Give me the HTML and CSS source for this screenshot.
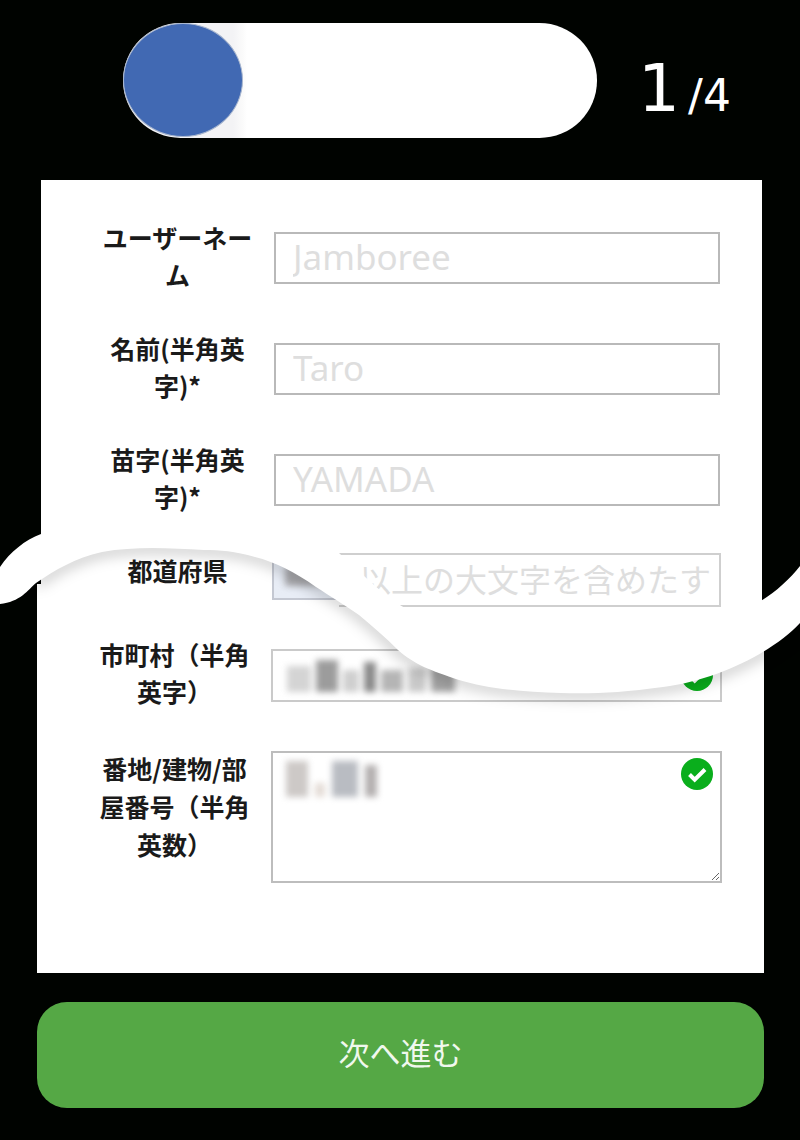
FILE: index.html
```html
<!DOCTYPE html>
<html lang="ja">
<head>
  <meta charset="UTF-8" />
  <meta name="viewport" content="width=device-width, initial-scale=1" />
  <title>ユーザー登録</title>
  <link rel="stylesheet" href="styles.css">
</head>
<body>
  <div class="progress">
    <div class="track">
      <div class="knob"></div>
    </div>
    <div class="count"><span class="count-now">1</span> <span class="count-all">/4</span></div>
  </div>

  <form>
    <div class="sheet sheet-top">
      <div class="row">
        <label class="label">ユーザーネーム</label>
        <input class="input" type="text" placeholder="Jamboree" />
      </div>
      <div class="row">
        <label class="label">名前(半角英字)*</label>
        <input class="input" type="text" placeholder="Taro" />
      </div>
      <div class="row">
        <label class="label">苗字(半角英字)*</label>
        <input class="input" type="text" placeholder="YAMADA" />
      </div>
      <div class="row row-pref">
        <label class="label">都道府県</label>
        <div class="split">
          <div class="stub"><div class="mosaic mosaic-pref"><span></span></div></div>
          <input class="input input-cut" type="text" placeholder="以上の大文字を含めたす" />
        </div>
      </div>
    </div>

    <div class="sheet sheet-bottom">
      <div class="row">
        <label class="label">市町村（半角英字）</label>
        <div class="field field-city">
          <input class="input input-wide" type="text" />
          <div class="mosaic mosaic-city">
            <span></span><span></span><span></span><span></span><span></span><span></span><span></span>
          </div>
          <svg class="check" viewBox="0 0 32 32"><circle cx="16" cy="16" r="16" fill="#0aae1c"/><path d="M8.5 16.5l5.2 5.2L24 11.5" fill="none" stroke="#fff" stroke-width="4"/></svg>
        </div>
      </div>
      <div class="row row-top">
        <label class="label">番地/建物/部屋番号（半角英数）</label>
        <div class="field field-area">
          <textarea class="area"></textarea>
          <div class="mosaic mosaic-area">
            <span></span><span></span><span></span><span></span>
          </div>
          <svg class="check" viewBox="0 0 32 32"><circle cx="16" cy="16" r="16" fill="#0aae1c"/><path d="M8.5 16.5l5.2 5.2L24 11.5" fill="none" stroke="#fff" stroke-width="4"/></svg>
        </div>
      </div>
    </div>

    <button class="next" type="button">次へ進む</button>
  </form>

  <svg class="wave" viewBox="0 0 800 1140" aria-hidden="true">
    <path class="wave-shadow" d="M800 623C775 650 720 680 663 687C620 693 590 694 561 693C520 692 485 688 459 680C430 670 415 665 398 650C385 637 370 623 357 613C340 600 330 595 316 587C295 572 275 562 255 557C235 551 220 550 204 550C170 548 135 546 102 552C75 558 55 570 36 583"/>
    <path class="wave-band" d="M0 567C10 552 25 540 41 534L250 520C300 525 320 535 339 553C360 572 385 597 405 608L740 609C760 606 785 585 800 566L800 623C775 650 720 680 663 687C620 693 590 694 561 693C520 692 485 688 459 680C430 670 415 665 398 650C385 637 372 626 359 615C343 604 330 596 316 587C295 572 275 562 255 557C235 551 220 550 204 550C170 548 135 546 102 552C75 558 55 570 36 583C28 590 20 602 0 604Z"/>
  </svg>
</body>
</html>
```

FILE: styles.css
```css
body {
  margin: 0;
  height: 1140px;
  overflow: hidden;
  position: relative;
  background: #000300;
  color: #1a1a1a;
  font-family: "Noto Sans", "Noto Sans CJK JP", sans-serif;
}

.progress {
  display: flex;
  align-items: flex-start;
  padding: 23px 0 0 123px;
}
.track {
  width: 474px;
  height: 115px;
  box-sizing: border-box;
  border-radius: 58px;
  background: linear-gradient(to right, #f3f3f5 110px, #fbfbfb 120px, #fff 124px);
}
.knob {
  width: 120px;
  height: 114px;
  box-sizing: border-box;
  border: 1px solid #a9b7cf;
  border-radius: 50%;
  background: #4169b3;
}
.count {
  margin: 27px 0 0 41px;
  color: #fff;
  font-family: "DejaVu Sans", sans-serif;
  white-space: nowrap;
}
.count-now {
  font-size: 66px;
}
.count-all {
  font-size: 44px;
  margin-left: 3px;
}

.sheet {
  background: #fff;
}
.sheet-top {
  position: relative;
  z-index: 1;
  margin: 42px 38px 0 41px;
  padding: 41px 42px 5px 59px;
}
.sheet-bottom {
  margin: -28px 36px 0 37px;
  padding: 54px 42px 90px 60px;
  clip-path: polygon(0 0, 725px 0, 725px 22px, 100% 22px, 100% 100%, 0 100%);
}
.row {
  display: flex;
  align-items: center;
  min-height: 74px;
  gap: 19px;
  margin-bottom: 37px;
}
.row:last-child {
  margin-bottom: 0;
}
.row-pref {
  align-items: flex-start;
  min-height: 0;
  margin-top: -1px;
  margin-bottom: 0;
}
.row-top {
  align-items: flex-start;
}
.label {
  flex: 0 0 155px;
  margin-top: -4px;
  font-size: 25px;
  line-height: 37px;
  font-weight: 700;
  text-align: center;
  font-family: "Noto Sans CJK JP", sans-serif;
}
.row-pref .label {
  margin-top: -1px;
}
.row-top .label {
  margin-top: 0;
  line-height: 38px;
}

.input {
  flex: 1;
  min-width: 0;
  height: 52px;
  box-sizing: border-box;
  padding: 0 4px 4px 17px;
  border: 2px solid #b9b9b9;
  border-radius: 0;
  background: #fff;
  font-family: "Noto Sans", sans-serif;
  font-size: 35px;
}
.input::placeholder {
  color: #dedede;
  opacity: 1;
}

.split {
  flex: 1;
  display: flex;
  align-items: flex-start;
  margin-left: -2px;
}
.stub {
  flex: 0 0 67px;
  height: 47px;
  box-sizing: border-box;
  border: 2px solid #c4c8d2;
  background: #e8edf6;
  overflow: hidden;
}
.input-cut {
  height: 54px;
  padding-left: 20px;
  border-left: none;
  border-color: #cfcfcf;
  font-family: "Noto Sans CJK JP", sans-serif;
  font-size: 32px;
}

.field {
  position: relative;
  flex: 1;
  min-width: 0;
  display: flex;
}
.input-wide {
  width: 100%;
  height: 53px;
  border-color: #cacaca;
}
.area {
  flex: 1;
  min-width: 0;
  height: 132px;
  margin-top: 2px;
  box-sizing: border-box;
  border: 2px solid #bdbdbd;
  border-radius: 0;
  background: #fff;
}

.mosaic {
  display: flex;
  filter: blur(3px);
}
.mosaic span {
  background: #a9a9ad;
}
.mosaic-pref {
  margin: 11px 0 0 11px;
}
.mosaic-pref span {
  width: 46px;
  height: 20px;
}
.mosaic-city {
  position: absolute;
  left: 16px;
  top: 11px;
  align-items: flex-end;
  gap: 5px;
}
.mosaic-city span:nth-child(1) { width: 24px; height: 26px; background: #d4d4d4; }
.mosaic-city span:nth-child(2) { width: 22px; height: 32px; background: #9c9c9c; }
.mosaic-city span:nth-child(3) { width: 16px; height: 22px; background: #cfcfcf; }
.mosaic-city span:nth-child(4) { width: 12px; height: 30px; background: #8a8a8a; }
.mosaic-city span:nth-child(5) { width: 22px; height: 22px; background: #b5b5b5; }
.mosaic-city span:nth-child(6) { width: 18px; height: 24px; background: #c9c9c9; }
.mosaic-city span:nth-child(7) { width: 24px; height: 26px; background: #a4a4a4; }
.mosaic-area {
  position: absolute;
  left: 15px;
  top: 12px;
  align-items: flex-end;
  gap: 7px;
}
.mosaic-area span:nth-child(1) { width: 22px; height: 36px; background: #cdc9c7; }
.mosaic-area span:nth-child(2) { width: 10px; height: 14px; background: #e4dcd6; }
.mosaic-area span:nth-child(3) { width: 26px; height: 36px; background: #b9bcc2; }
.mosaic-area span:nth-child(4) { width: 12px; height: 32px; background: #b4b0b0; }

.check {
  position: absolute;
  width: 32px;
  height: 32px;
  right: 9px;
}
.field-city .check {
  top: 10px;
}
.field-area .check {
  top: 9px;
}

.next {
  display: block;
  width: 727px;
  height: 106px;
  margin: 29px 0 0 37px;
  padding-bottom: 8px;
  border: none;
  border-radius: 30px;
  background: #55a845;
  color: #f0f8ee;
  font-family: "Noto Sans CJK JP", sans-serif;
  font-size: 31px;
}

.wave {
  position: absolute;
  left: 0;
  top: 0;
  width: 800px;
  height: 1140px;
  z-index: 2;
  pointer-events: none;
}
.wave-shadow {
  fill: none;
  stroke: #000;
  stroke-opacity: 0.22;
  stroke-width: 10;
  filter: blur(7px);
}
.wave-band {
  fill: #fff;
}
```
